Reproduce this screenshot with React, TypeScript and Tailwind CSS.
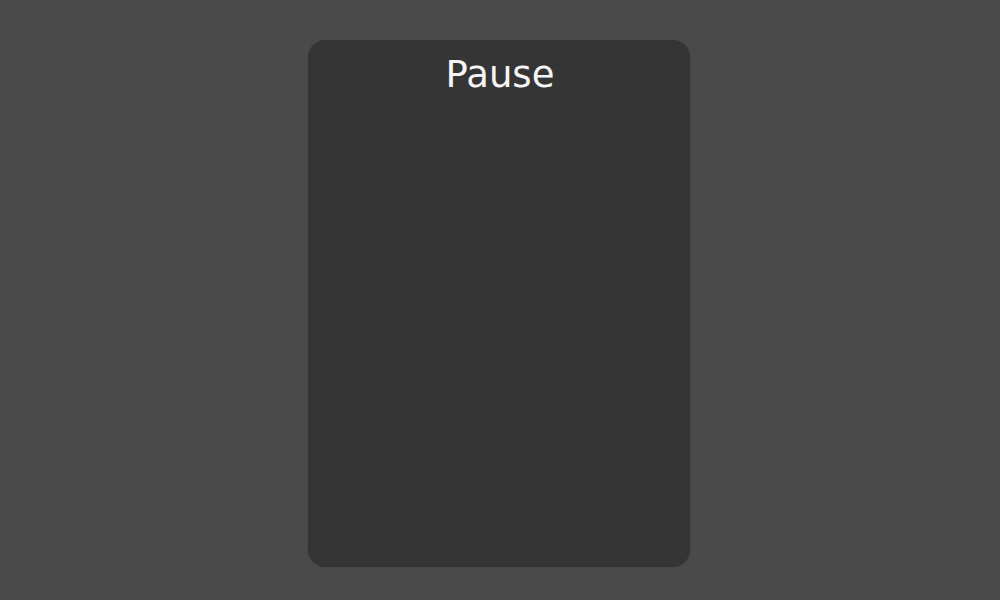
export default function App() {
  return (
    <div className="w-[1000px] h-[600px] bg-[#4a4a4a] flex justify-center pt-[40px]" style={{ fontFamily: '"DejaVu Sans", sans-serif' }}>
      <div className="w-[382px] h-[527px] bg-[#353535] rounded-[18px] ml-[-2px] flex flex-col items-center pt-[13px] shadow-[0_0_1px_rgba(0,0,0,0.4)]">
        <h1 className="text-[37px] leading-[43px] text-[#f5f5f5] ml-[2px]">Pause</h1>
      </div>
    </div>
  );
}
